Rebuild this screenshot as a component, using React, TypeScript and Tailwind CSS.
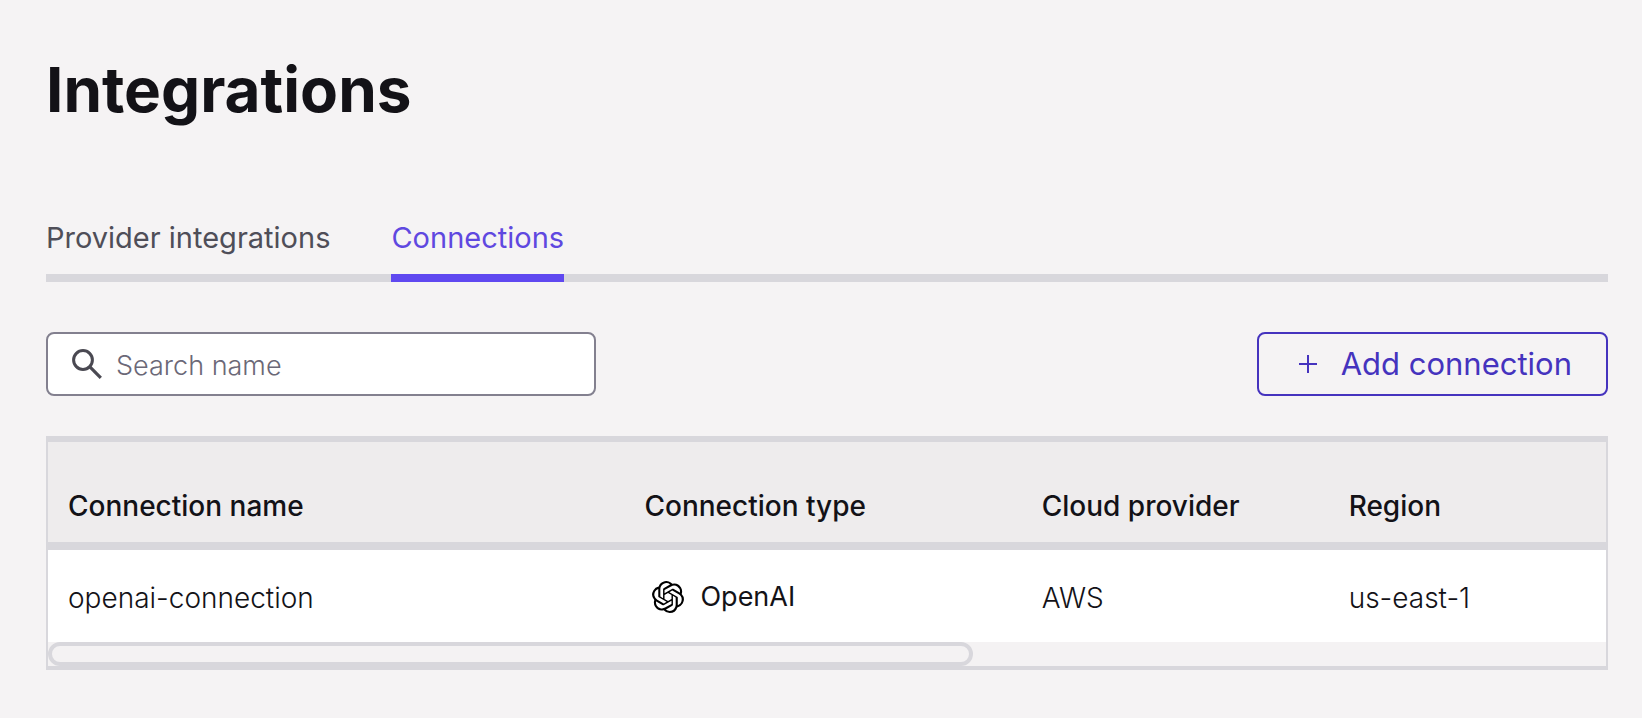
import { SiOpenai } from "react-icons/si";

const tabs = [
  { label: "Provider integrations", active: false },
  { label: "Connections", active: true },
];

const connections = [
  { name: "openai-connection", type: "OpenAI", cloud: "AWS", region: "us-east-1" },
];

function SearchIcon() {
  return (
    <svg className="size-[30px] shrink-0 text-[#4a4952]" viewBox="0 0 30 30" fill="none" stroke="currentColor" aria-hidden="true">
      <circle cx="11" cy="11" r="9.4" strokeWidth="3" />
      <path d="M17.4 17.4 28.8 28.8" strokeWidth="3.2" />
    </svg>
  );
}

function Tabs() {
  return (
    <nav className="mt-[92px] flex gap-[61px] border-b-8 border-[#d8d7dc] text-[29px] leading-8">
      {tabs.map((tab) => (
        <a
          key={tab.label}
          href="#"
          aria-current={tab.active ? "page" : undefined}
          className={
            tab.active
              ? "-mb-2 border-b-8 border-[#5f48f0] pb-5 text-[#5f48e0]"
              : "-mb-2 border-b-8 border-transparent pb-5 text-[#4f4e58]"
          }
        >
          {tab.label}
        </a>
      ))}
    </nav>
  );
}

function Toolbar() {
  return (
    <div className="mt-[50px] flex items-center justify-between">
      <label className="flex h-16 w-[550px] items-center gap-3.5 rounded-lg border-2 border-[#83808f] bg-white px-6">
        <SearchIcon />
        <input
          type="search"
          aria-label="Search name"
          placeholder="Search name"
          className="min-w-0 flex-1 bg-transparent pt-1 text-[27px] leading-8 font-light outline-none placeholder:text-[#6b6877]"
        />
      </label>
      <button
        type="button"
        className="flex h-16 items-center gap-6 rounded-lg border-2 border-[#4533be] pr-[34px] pl-10 text-[31px] leading-10 text-[#4533be]"
      >
        <svg className="size-[18px]" viewBox="0 0 18 18" fill="none" stroke="currentColor" strokeWidth="2" aria-hidden="true">
          <path d="M9 0v18M0 9h18" />
        </svg>
        Add connection
      </button>
    </div>
  );
}

function ConnectionsTable() {
  return (
    <div className="mt-10 border-x-2 border-t-6 border-b-4 border-[#d8d7dc]">
      <table className="w-full table-fixed border-collapse text-left text-[28px] leading-8">
        <thead className="bg-[#eeeced]">
          <tr className="h-[104px] border-b-8 border-[#d8d7dc]">
            <th scope="col" className="w-[37%] px-5 pb-5 align-bottom font-medium">Connection name</th>
            <th scope="col" className="w-[25.5%] px-5 pb-5 align-bottom font-medium">Connection type</th>
            <th scope="col" className="w-[19.7%] px-5 pb-5 align-bottom font-medium">Cloud provider</th>
            <th scope="col" className="px-5 pb-5 align-bottom font-medium">Region</th>
          </tr>
        </thead>
        <tbody className="bg-white font-light">
          {connections.map((row) => (
            <tr key={row.name} className="h-24">
              <td className="px-5 pt-1">{row.name}</td>
              <td className="px-5 pt-0.5">
                <span className="flex items-center gap-4 pl-2 text-[27px] font-normal">
                  <SiOpenai className="size-8 text-black" aria-hidden="true" />
                  {row.type}
                </span>
              </td>
              <td className="px-5 pt-1">{row.cloud}</td>
              <td className="px-5 pt-1">{row.region}</td>
            </tr>
          ))}
        </tbody>
      </table>
      <div className="h-6 bg-[#f4f2f3]">
        <div className="h-6 w-[59.4%] rounded-full border-4 border-[#d8d7dc]" />
      </div>
    </div>
  );
}

export default function App() {
  return (
    <main className="min-h-screen bg-[#f5f3f4] pt-[50px] pr-[34px] pb-12 pl-[46px] font-['Inter',sans-serif] text-[#131217]">
      <h1 className="text-[62px] leading-20 font-bold">Integrations</h1>
      <Tabs />
      <Toolbar />
      <ConnectionsTable />
    </main>
  );
}
